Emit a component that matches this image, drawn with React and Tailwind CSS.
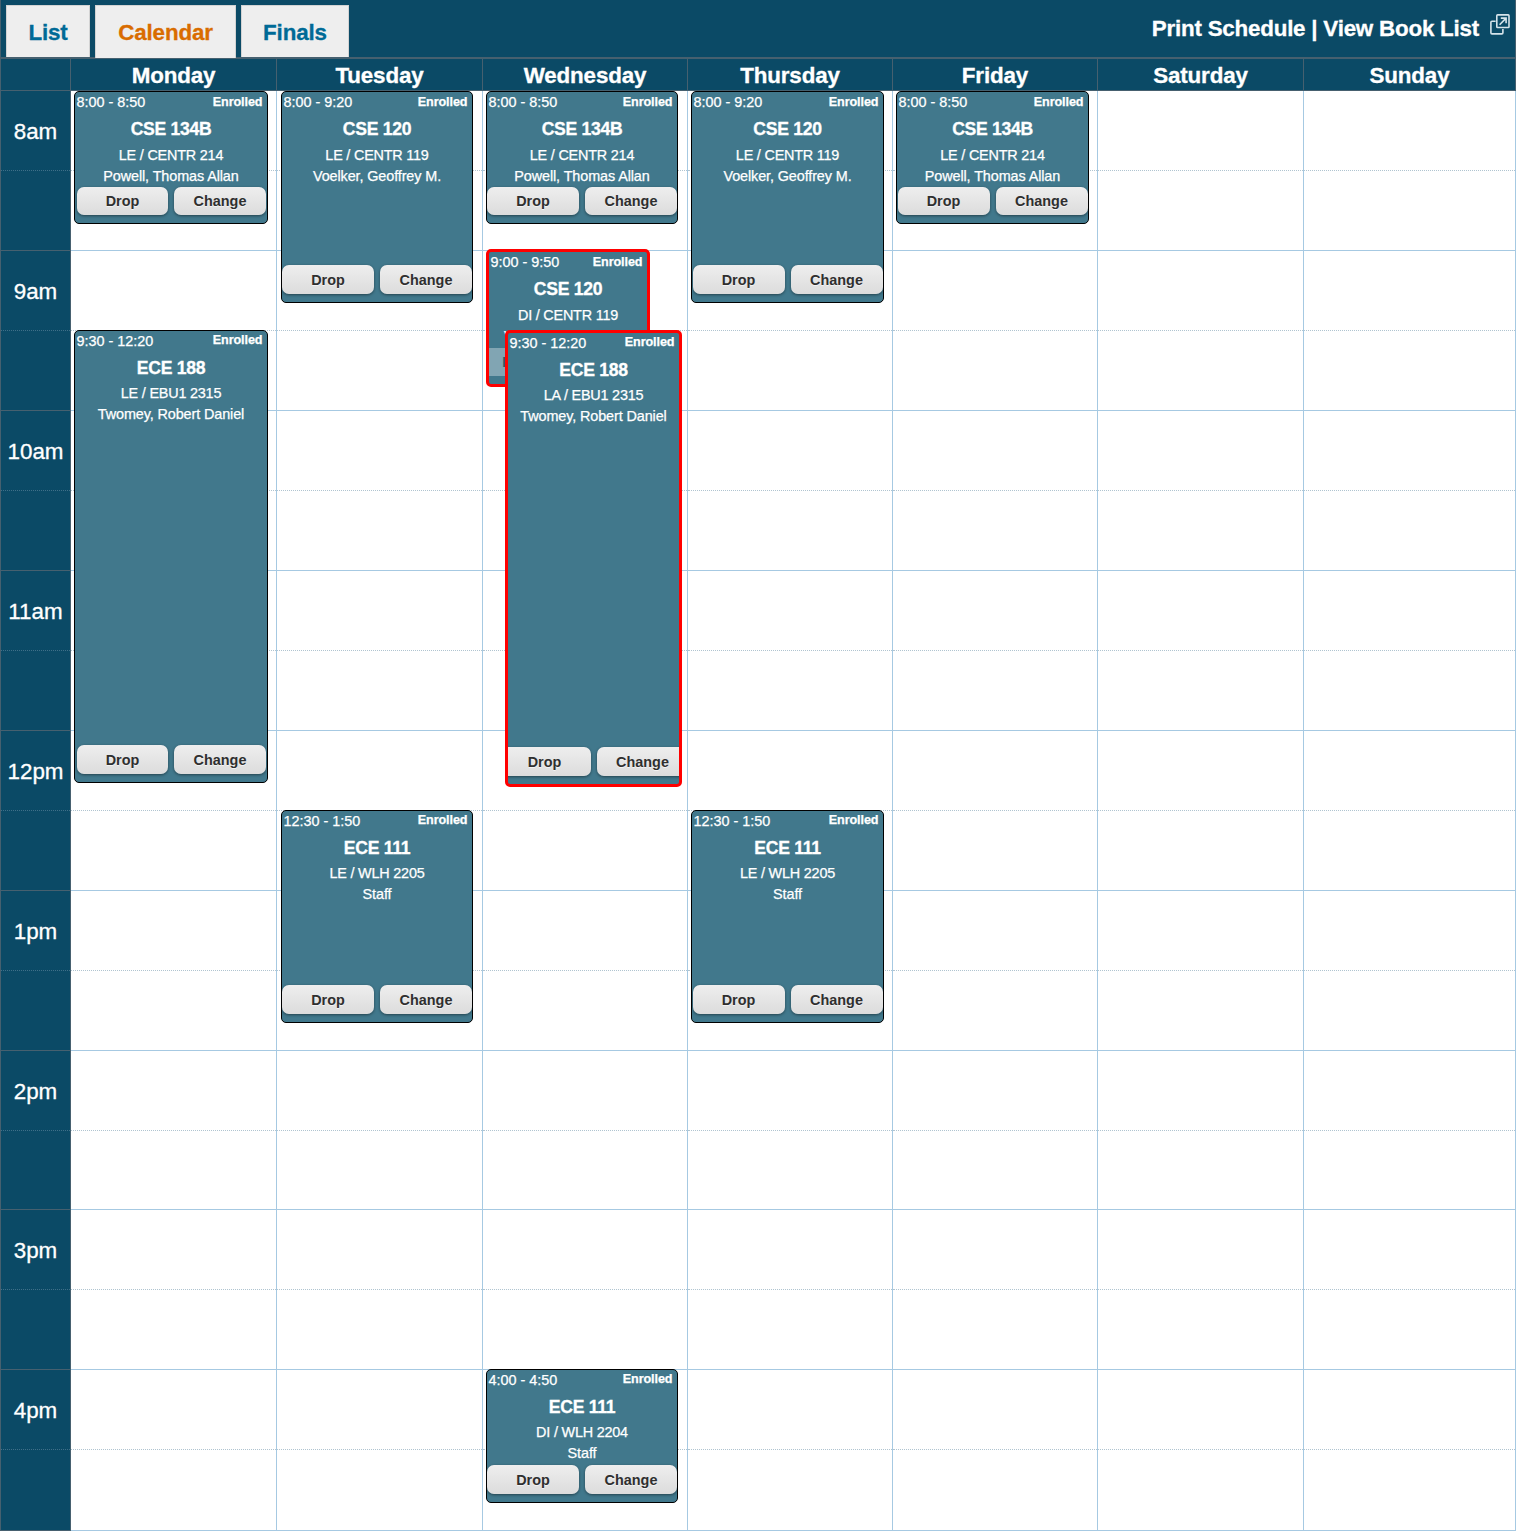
import React from "react";

const ROWS = [
  "h-[80px]", "h-[80px]", "h-[80px]", "h-[80px]", "h-[80px]", "h-[80px]",
  "h-[80px]", "h-[80px]", "h-[80px]", "h-[80px]", "h-[80px]", "h-[80px]",
  "h-[80px]", "h-[79px]", "h-[80px]", "h-[80px]", "h-[80px]", "h-[81px]",
];
const HOURS = ["8am", "9am", "10am", "11am", "12pm", "1pm", "2pm", "3pm", "4pm"];

// Event boxes are placed by their offset inside the day column.
const cse134 = { time: "8:00 - 8:50", course: "CSE 134B", room: "LE / CENTR 214", who: "Powell, Thomas Allan", early: true, compact: true };
const cse120 = { time: "8:00 - 9:20", course: "CSE 120", room: "LE / CENTR 119", who: "Voelker, Geoffrey M.", early: true };
const ece111 = { time: "12:30 - 1:50", course: "ECE 111", room: "LE / WLH 2205", who: "Staff" };

const DAYS = [
  {
    name: "Monday", width: "w-[206px]",
    events: [
      { ...cse134, box: "left-[3px] top-0 w-[194px] h-[133px]", shift: true },
      { time: "9:30 - 12:20", course: "ECE 188", room: "LE / EBU1 2315", who: "Twomey, Robert Daniel", box: "left-[3px] top-[239px] w-[194px] h-[453px]", shift: true },
    ],
  },
  {
    name: "Tuesday", width: "w-[206px]",
    events: [
      { ...cse120, box: "left-[4px] top-0 w-[192px] h-[212px]" },
      { ...ece111, box: "left-[4px] top-[719px] w-[192px] h-[213px]" },
    ],
  },
  {
    name: "Wednesday", width: "w-[205px]",
    events: [
      { ...cse134, box: "left-[3px] top-0 w-[192px] h-[133px]" },
      { time: "9:00 - 9:50", course: "CSE 120", room: "DI / CENTR 119", who: "Voelker, Geoffrey M.", box: "left-[3px] top-[158px] w-[164px] h-[138px]", conflict: true, faded: true, early: true, compact: true },
      { time: "9:30 - 12:20", course: "ECE 188", room: "LA / EBU1 2315", who: "Twomey, Robert Daniel", box: "left-[22px] top-[239px] w-[177px] h-[457px]", conflict: true },
      { time: "4:00 - 4:50", course: "ECE 111", room: "DI / WLH 2204", who: "Staff", box: "left-[3px] top-[1278px] w-[192px] h-[134px]" },
    ],
  },
  {
    name: "Thursday", width: "w-[205px]",
    events: [
      { ...cse120, box: "left-[3px] top-0 w-[193px] h-[212px]" },
      { ...ece111, box: "left-[3px] top-[719px] w-[193px] h-[213px]" },
    ],
  },
  { name: "Friday", width: "w-[205px]", events: [{ ...cse134, box: "left-[3px] top-0 w-[193px] h-[133px]" }] },
  { name: "Saturday", width: "w-[206px]", events: [] },
  { name: "Sunday", width: "w-[212px]", events: [] },
];

function Tab({ label, active }) {
  return (
    <button
      className={
        "border border-b-0 border-[#d3d3d3] bg-[#eeeeee] pt-[2px] text-center text-[22.4px] font-bold tracking-[-0.15px] [-webkit-text-stroke:0.3px] " +
        (active ? "h-[53px] w-[141px] text-[#d96c00]" : "h-[52px] text-[#006a96] ") +
        (label === "List" ? " w-[84px]" : label === "Finals" ? " w-[108px]" : "")
      }
    >
      {label}
    </button>
  );
}

function ActionButton({ label, faded, compact, narrow }) {
  return (
    <button
      className={
        "shrink-0 text-[14.4px] font-bold leading-[28px] " +
        (compact ? "h-[28px] " : "h-[29px] pt-px ") +
        (narrow ? "w-[91px] " : "w-[92px] ") +
        (faded
          ? "bg-[#81a5b3] text-[#315667]"
          : "rounded-[7px] bg-linear-to-b from-[#eeeeee] to-[#dcdcdc] text-[#2f2f2f] shadow-[0_1px_3px_rgba(0,0,0,0.45)] [text-shadow:0_1px_0_#f3f3f3]")
      }
    >
      {label}
    </button>
  );
}

function EventCard({ event }) {
  return (
    <div
      className={
        "absolute flex flex-col overflow-hidden rounded-[5px] bg-[#41788c] text-white " +
        (event.conflict ? "border-[3px] border-[#ff0000] " : "border border-black ") +
        event.box
      }
    >
      <div className="flex h-[21px] shrink-0 justify-between pl-[1.4px] pr-[4.6px] leading-[20px] [-webkit-text-stroke:0.25px]">
        <span className="whitespace-nowrap text-[14.4px]">{event.time}</span>
        <span className={"text-[12.6px] font-bold tracking-[-0.1px] " + (event.early ? "leading-[20px]" : "leading-[18px]")}>Enrolled</span>
      </div>
      <div className="h-[32px] shrink-0 text-center text-[17.6px] font-bold leading-[32px] tracking-[-0.3px] [-webkit-text-stroke:0.3px]">{event.course}</div>
      <div className={"h-[20px] shrink-0 text-center text-[14.4px] tracking-[-0.2px] [-webkit-text-stroke:0.25px] " + (event.early ? "leading-[20px]" : "leading-[18px]")}>{event.room}</div>
      <div className={"h-[21px] shrink-0 whitespace-nowrap text-center text-[14.4px] tracking-[-0.1px] [-webkit-text-stroke:0.25px] " + (event.early ? "leading-[23px]" : "leading-[21px]")}>{event.who}</div>
      <div className={"mb-[8px] mt-auto flex shrink-0 justify-center gap-[6px] " + (event.shift ? "pl-[1px]" : "")}>
        <ActionButton label="Drop" faded={event.faded} compact={event.compact} narrow={event.shift} />
        <ActionButton label="Change" faded={event.faded} compact={event.compact} />
      </div>
    </div>
  );
}

function PopOutIcon() {
  return (
    <svg className="ml-[11px] mt-[14px] h-[21px] w-[20px]" viewBox="0 0 20 21" fill="none" stroke="#d5e3ea" strokeWidth="1.6">
      <path d="M5.6 7.2H2Q.9 7.2.9 8.3V18.8Q.9 19.9 2 19.9H11.8Q12.9 19.9 12.9 18.8V15" />
      <rect x="6.8" y=".9" width="12.2" height="12.6" rx=".8" />
      <path d="M9.6 10.8 15.6 4.6M10.8 4.1H16.1V9.3" />
    </svg>
  );
}

export default function App() {
  return (
    <div className="h-[1534px] w-[1516px] overflow-hidden bg-white font-['Liberation_Sans',Arial,sans-serif]">
      <header className="flex h-[59px] items-start justify-between border-b-2 border-l border-r border-[#46606f] bg-[#0b4a66] text-white">
        <nav className="-mb-[1px] flex items-start gap-[5px] pl-[5px] pt-[5px]">
          <Tab label="List" />
          <Tab label="Calendar" active />
          <Tab label="Finals" />
        </nav>
        <div className="flex pr-[5px] text-[22.4px] font-bold tracking-[-0.23px]">
          <span className="mt-[13px] leading-[32px] [-webkit-text-stroke:0.3px]">Print Schedule | View Book List</span>
          <PopOutIcon />
        </div>
      </header>

      <div className="flex h-[32px] bg-[#0b4a66] text-white">
        <div className="w-[71px] border-b border-l border-r border-[#46606f]" />
        {DAYS.map((d) => (
          <div key={d.name} className={"border-b border-r border-[#46606f] text-center text-[22.4px] font-bold leading-[34px] tracking-[-0.15px] [-webkit-text-stroke:0.3px] " + d.width}>
            {d.name}
          </div>
        ))}
      </div>

      <div className="flex">
        <div className="w-[71px] border-l border-r border-[#46606f] bg-[#0b4a66] text-white">
          {ROWS.map((h, i) => (
            <div
              key={i}
              className={
                "border-b text-center text-[22.4px] leading-[81px] [-webkit-text-stroke:0.3px] " + h +
                (i % 2 ? " border-[#46606f]" : " border-dotted border-[#3f6f88]")
              }
            >
              {i % 2 ? "" : HOURS[i / 2]}
            </div>
          ))}
        </div>
        {DAYS.map((d) => (
          <div key={d.name} className={"relative border-r border-[#a6c9e2] " + d.width}>
            {ROWS.map((h, i) => (
              <div key={i} className={"border-b " + h + (i % 2 ? " border-[#a6c9e2]" : " border-dotted border-[#b0c4d0]")} />
            ))}
            {d.events.map((e, i) => (
              <EventCard key={i} event={e} />
            ))}
          </div>
        ))}
      </div>
    </div>
  );
}
